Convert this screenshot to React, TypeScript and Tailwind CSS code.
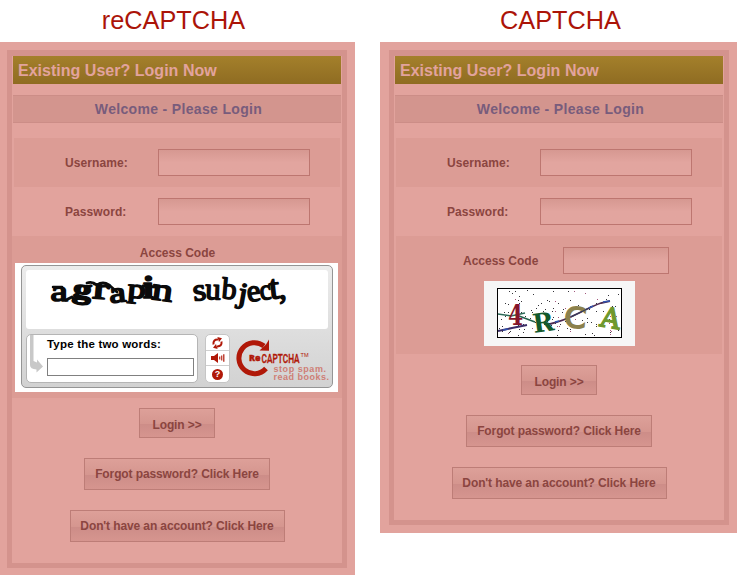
import type { ReactNode } from "react";

type Glyph = { c: string; x: number; y: number; size: number; r?: number; sx?: number; w?: number; fill?: string };

function Warped({ glyphs, family, stroke }: { glyphs: Glyph[]; family: string; stroke?: number }) {
  return (
    <>
      {glyphs.map((g, i) => (
        <text
          key={i}
          transform={`translate(${g.x} ${g.y}) rotate(${g.r ?? 0}) scale(${g.sx ?? 1} 1)`}
          fontFamily={family}
          fontSize={g.size}
          fontWeight={g.w ?? 400}
          fill={g.fill ?? "#0a0a0a"}
          stroke={g.fill ?? "#0a0a0a"}
          strokeWidth={stroke ?? 0}
          strokeLinejoin="round"
        >
          {g.c}
        </text>
      ))}
    </>
  );
}

const firstWord: Glyph[] = [
  { c: "a", x: 24.5, y: 31, size: 30, r: 0, sx: 1.3 },
  { c: "g", x: 46, y: 27, size: 28, r: 8, sx: 1.35, w: 700 },
  { c: "r", x: 66, y: 28, size: 31, r: 5, sx: 1.6 },
  { c: "a", x: 84, y: 33, size: 29, r: -6, sx: 1.3 },
  { c: "p", x: 101, y: 27, size: 27, r: 5, sx: 1.35 },
  { c: "i", x: 117, y: 28, size: 32, r: 0, sx: 1.2, w: 700 },
  { c: "n", x: 125, y: 29, size: 32, r: 8, sx: 1.3 },
];

const secondWord: Glyph[] = [
  { c: "s", x: 168, y: 31, size: 31, r: -8, sx: 1.1 },
  { c: "u", x: 179, y: 29, size: 31, r: 2, sx: 1 },
  { c: "b", x: 195, y: 28, size: 30, r: 5, sx: 1 },
  { c: "j", x: 211, y: 32, size: 29, r: 10, sx: 1.15 },
  { c: "e", x: 222, y: 32, size: 31, r: -8, sx: 1 },
  { c: "c", x: 234.5, y: 30, size: 29, r: -6, sx: 0.9 },
  { c: "t", x: 244, y: 29, size: 34, r: -6, sx: 1.1 },
  { c: ",", x: 253, y: 29, size: 32, r: -4, sx: 1 },
];

const codeLetters: Glyph[] = [
  { c: "4", x: 11, y: 37, size: 28, r: 0, sx: 0.78, w: 700, fill: "#85152b" },
  { c: "R", x: 37, y: 45, size: 26, r: -8, sx: 0.98, w: 700, fill: "#13592b" },
];

function noise(n: number) {
  const v = Math.sin(n * 12.9898) * 43758.5453;
  return v - Math.floor(v);
}

const specks = Array.from({ length: 120 }, (_, i) => ({
  x: 2 + Math.floor(noise(i + 1) * 120),
  y: 2 + Math.floor(noise(i + 401) * 46),
}));

function CodeImage() {
  return (
    <div className="mx-auto flex h-[65px] w-[151px] bg-[#f6f6f6] pl-[13px] pt-[7px]">
      <svg width="125" height="50" viewBox="0 0 125 50" className="block bg-white">
        {specks.map((s, i) => (
          <rect key={i} x={s.x} y={s.y} width="1" height="1" fill={i % 5 ? "#34343a" : "#a2567c"} />
        ))}
        <g fill="none" strokeWidth="1.5">
          <path d="M1 26 L14 28 L28 25" stroke="#2c6b58" />
          <path d="M1 43 L15 40 L30 37" stroke="#3a2c66" strokeWidth="2" />
          <path d="M22 28 L38 34" stroke="#24604a" />
          <path d="M53 36 Q66 33 82 25 T104 15 L113 13" stroke="#4d2a52" strokeWidth="1.8" />
          <path d="M58 34 L62 33 M92 20 L96 18 M106 14 L113 13 M6 42 L11 41" stroke="#3153b0" />
        </g>
        <Warped glyphs={codeLetters} family="'DejaVu Serif', serif" />
        <text transform="translate(66.5 38.5) rotate(5) scale(1.12 1)" fontFamily="'DejaVu Sans', sans-serif" fontSize="28" fill="#8c814c" stroke="#8c814c" strokeWidth="1.6">C</text>
        <text transform="translate(102 38) rotate(10)" fontFamily="'DejaVu Serif', serif" fontSize="28" fill="#6f982d" stroke="#6f982d" strokeWidth="1.4">A</text>
        <path d="M74 29 L84 24 L92 20" stroke="#333c5c" strokeWidth="1.2" fill="none" />
        <rect x="0.5" y="0.5" width="124" height="49" fill="none" stroke="#000" />
      </svg>
    </div>
  );
}

function RecaptchaLogo() {
  return (
    <svg width="96" height="50" viewBox="0 0 96 50" className="block">
      <path d="M29 12 A15.5 15.5 0 1 0 31 34.5" fill="none" stroke="#b01808" strokeWidth="5" />
      <path d="M24.5 16.5 L31 10.5 L34 5.5 V16.7 Z" fill="#b01808" />
      <text x="14" y="27" fontFamily="'Open Sans', sans-serif" fontWeight="800" fontSize="8.5" fill="#b01808" stroke="#b01808" strokeWidth="0.4" textLength="11.5" lengthAdjust="spacingAndGlyphs">Re</text>
      <text x="26.6" y="29" fontFamily="Roboto, sans-serif" fontWeight="500" fontSize="13" fill="#b01808" stroke="#b01808" strokeWidth="0.35" textLength="38" lengthAdjust="spacingAndGlyphs">CAPTCHA</text>
      <text x="65.5" y="22.5" fontFamily="'Liberation Sans', sans-serif" fontSize="4.6" fill="#b01808" textLength="8" lengthAdjust="spacingAndGlyphs">TM</text>
      <text x="38.5" y="38.3" fontFamily="'Liberation Sans', sans-serif" fontWeight="700" fontSize="9" fill="#cf7e75" textLength="52.5" lengthAdjust="spacing">stop spam.</text>
      <text x="38.5" y="46" fontFamily="'Liberation Sans', sans-serif" fontWeight="700" fontSize="9" fill="#cf7e75" textLength="55.5" lengthAdjust="spacing">read books.</text>
    </svg>
  );
}

function Recaptcha() {
  return (
    <div className="ml-[3px] h-[129px] w-[323px] bg-white pl-[6px] pt-[2px]">
      <div className="h-[123px] w-[312px] rounded-[5px] border border-[#959595] bg-linear-to-b from-[#ececec] to-[#d2d2d2] pl-1 pt-1">
        <div className="h-[59px] w-[302px] rounded-[3px] bg-white">
          <svg width="302" height="59" viewBox="0 0 302 59" className="block overflow-visible">
            <Warped glyphs={firstWord} family="'Liberation Serif', serif" stroke={1.6} />
            <g fill="none" stroke="#0a0a0a" strokeLinecap="round" strokeLinejoin="round">
              <path d="M40 30 L46 27 L50 31" strokeWidth="3" />
              <path d="M61 13 Q66 11 71 15 Q77 11 83 15 L91 22" strokeWidth="2.8" />
              <path d="M27 17 H36" strokeWidth="2.5" />
              <path d="M117 16 L130 17" strokeWidth="2.8" />
            </g>
            <Warped glyphs={secondWord} family="'Liberation Serif', serif" stroke={1.5} />
          </svg>
        </div>
        <div className="mt-[5px] flex">
          <div className="flex h-[49px] w-[172px] rounded-[5px] border border-[#b5b5b5] bg-white">
            <svg width="20" height="47" viewBox="0 0 20 47" className="block shrink-0">
              <path d="M3 0 H6.5 V26 L10 27.5 V24.5 L16 31.5 L9.5 37.5 V34.5 Q3 34 3 30 Z" fill="#c8c8c8" />
            </svg>
            <div>
              <div className="mt-[2px] h-[14px] whitespace-nowrap text-[11.5px] font-bold leading-[14px] tracking-[0.2px] text-black">Type the two words:</div>
              <input className="mt-[7px] block h-[18px] w-[147px] border border-[#808080] bg-white outline-none" />
            </div>
          </div>
          <div className="ml-[7px] flex h-[49px] w-[25px] flex-col rounded-[5px] border border-[#c5c5c5] bg-white">
            <div className="flex h-4 items-center justify-center border-b border-[#cfcfcf]">
              <svg width="11" height="12" viewBox="0 0 11 12" fill="none" stroke="#b01808" strokeWidth="2">
                <path d="M1.5 7.5 Q0.8 2.4 6 2.6 M9.5 4.5 Q10.2 9.6 5 9.4" />
                <path d="M5.4 0 L10 1.2 L7 5 Z M5.6 12 L1 10.8 L4 7 Z" fill="#b01808" stroke="none" />
              </svg>
            </div>
            <div className="flex h-[15px] items-center justify-center border-b border-[#cfcfcf]">
              <svg width="14" height="10" viewBox="0 0 14 10" className="ml-px" fill="#b01808">
                <path d="M0 3 H3 L7 0 V10 L3 7 H0 Z" />
                <path d="M8.2 3.5 H9.3 V6.5 H8.2 Z M10.2 2.5 H11.3 V7.5 H10.2 Z M12.2 1.2 H13.4 V8.8 H12.2 Z" />
              </svg>
            </div>
            <div className="flex h-4 items-center justify-center">
              <div className="flex size-[11px] items-center justify-center rounded-full bg-[#b01808] text-[9px] font-bold leading-none text-white">?</div>
            </div>
          </div>
          <div className="ml-[5px]">
            <RecaptchaLogo />
          </div>
        </div>
      </div>
    </div>
  );
}

function Field({ label, tinted }: { label: string; tinted?: boolean }) {
  return (
    <div className={`mx-0.5 flex h-[49px] items-center ${tinted ? "bg-[#dc9c95]" : ""}`}>
      <label className="ml-[51px] w-[93px] text-[12px] font-bold leading-4 tracking-[0.08px]">{label}</label>
      <input className="h-[27px] w-[152px] border border-[#bd7670] bg-linear-to-b from-[#d69891] to-[#e2a59f] to-50% outline-none" />
    </div>
  );
}

function ActionButton({ children, className }: { children: ReactNode; className: string }) {
  return (
    <button className={`block shrink-0 whitespace-nowrap border border-[#bd7d77] bg-[linear-gradient(to_bottom,#dda099_0%,#d5968f_52%,#cd8d88_55%,#d6958f_100%)] text-center text-[12px] font-bold tracking-[-0.11px] ${className}`}>
      {children}
    </button>
  );
}

function LoginPanel({ className, actionsClass, children }: { className: string; actionsClass: string; children: ReactNode }) {
  return (
    <section className={`bg-[#e2a39d] pt-2 ${className}`}>
      <div className="h-full w-[340px] border-[5px] border-t-[6px] border-[#d4938d] px-px">
        <h2 className="h-7 bg-linear-to-b from-[#a4802b] to-[#8f6c22] pl-[5px] text-[16px] font-bold leading-[29px] tracking-[0.02px] text-[#e2a39d]">Existing User? Login Now</h2>
        <div className="mt-[11px] h-7 border-y border-[#cc8d87] bg-[#d3958e] pl-[3px] text-center text-[14px] font-bold leading-[26px] tracking-[0.33px] text-[#785c7c]">Welcome - Please Login</div>
        <div className="-mx-px mt-[15px]">
          <Field label="Username:" tinted />
          <Field label="Password:" />
          {children}
          <div className={`flex flex-col items-center gap-5 ${actionsClass}`}>
            <ActionButton className="h-[30px] w-[76px] pt-[3px]">Login &gt;&gt;</ActionButton>
            <ActionButton className="h-8 w-[186px]">Forgot password? Click Here</ActionButton>
            <ActionButton className="h-8 w-[215px]">Don't have an account? Click Here</ActionButton>
          </div>
        </div>
      </div>
    </section>
  );
}

export default function App() {
  return (
    <main className="flex h-[575px] w-[737px] items-start gap-[25px] overflow-hidden bg-white font-['Liberation_Sans',Arial,sans-serif] text-[#8b4540]">
      <div className="w-[355px] shrink-0">
        <h1 className="h-[42px] pr-[8px] text-center text-[25.3px] leading-[41px] text-[#ab1408]">reCAPTCHA</h1>
        <LoginPanel className="h-[533px] pb-[7px] pl-[7px]" actionsClass="mt-2.5">
          <div className="h-[162px] bg-[#dc9c95] pt-[9px]">
            <div className="mb-[2px] h-4 pl-px text-center text-[12px] font-bold leading-4">Access Code</div>
            <Recaptcha />
          </div>
        </LoginPanel>
      </div>
      <div className="w-[357px] shrink-0">
        <h1 className="h-[42px] pl-[4px] text-center text-[25.3px] leading-[41px] text-[#ab1408]">CAPTCHA</h1>
        <LoginPanel className="h-[491px] pb-2 pl-[9px]" actionsClass="mt-[11px]">
          <div className="mx-0.5 h-[118px] bg-[#dc9c95] pt-[11px]">
            <div className="mb-[7px] flex h-[27px] items-center">
              <label className="ml-[67px] w-[100px] text-[12px] font-bold leading-4">Access Code</label>
              <input className="h-[27px] w-[106px] border border-[#bd7670] bg-linear-to-b from-[#d69891] to-[#e2a59f] to-50% outline-none" />
            </div>
            <CodeImage />
          </div>
        </LoginPanel>
      </div>
    </main>
  );
}
